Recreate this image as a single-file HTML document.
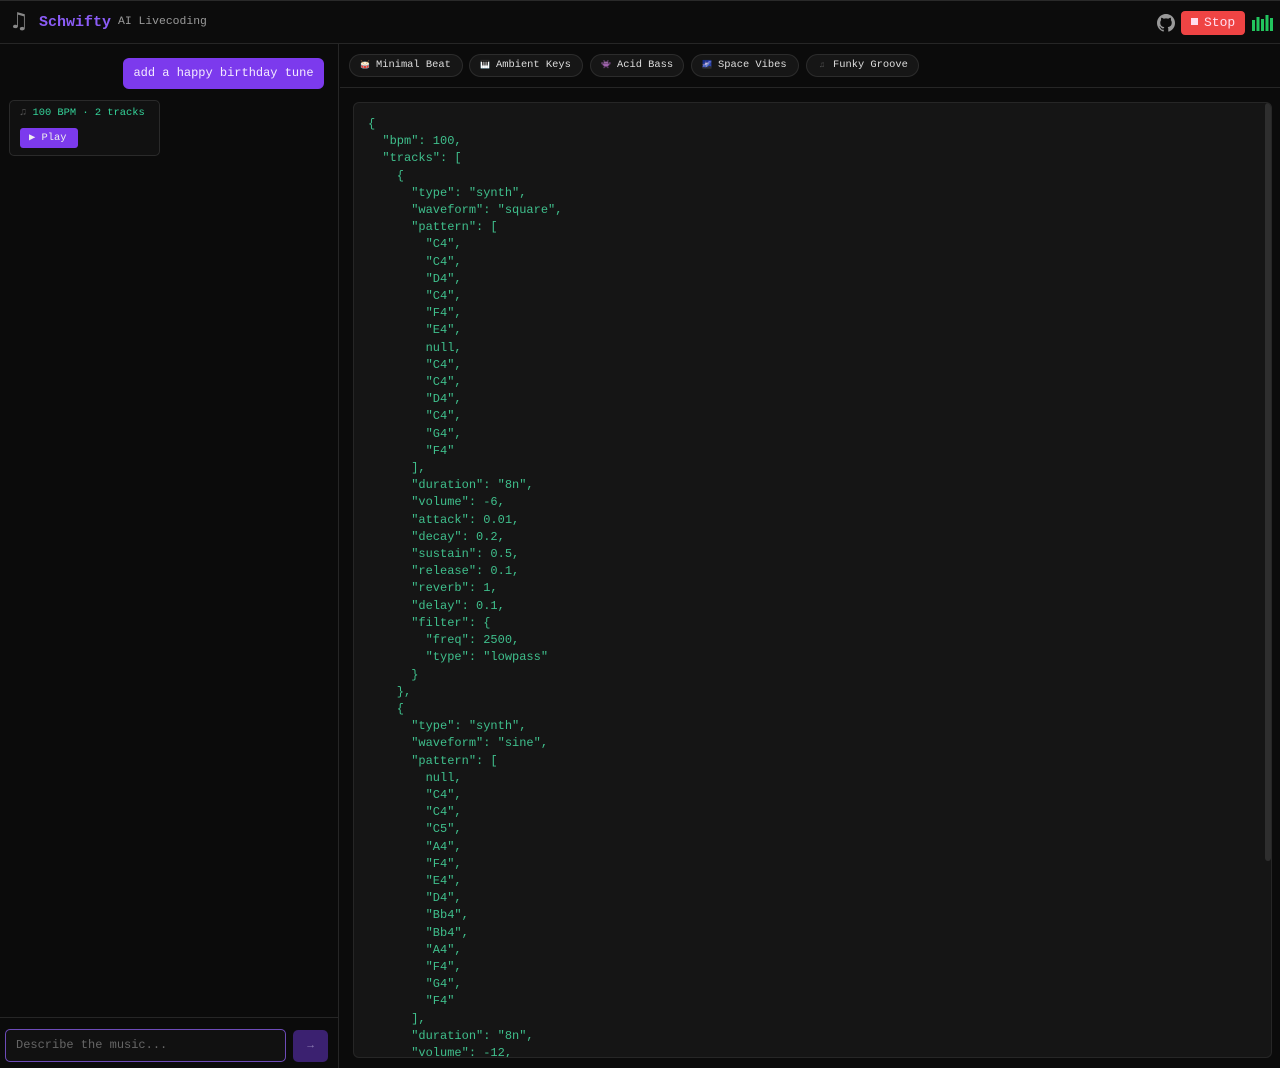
<!DOCTYPE html>
<html><head><meta charset="utf-8"><style>
*{box-sizing:border-box;margin:0;padding:0}
body{width:1280px;height:1068px;background:#0b0b0b;font-family:"Liberation Mono","DejaVu Sans Mono",monospace;color:#ddd;overflow:hidden;position:relative}
.hdr{position:absolute;left:0;top:0;width:1280px;height:44px;border-top:1px solid #2a2a2a;border-bottom:1px solid #262626;background:#0c0c0c}
.logo{position:absolute;left:9px;top:8px;font-size:22px;color:#888;font-family:"DejaVu Sans",sans-serif}
.brand{position:absolute;left:39px;top:13px;font-size:15px;font-weight:bold;color:#8b5cf6}
.sub{position:absolute;left:118px;top:15px;font-size:11.4px;color:#999}
.stop{position:absolute;left:1181px;top:10px;width:64px;height:24px;background:#ef4444;border-radius:4px;color:#fde;font-size:13px;line-height:24px;padding-left:10px}
.stop i{display:inline-block;width:7px;height:7px;background:#fde;margin-right:6px;vertical-align:1px}
.left{position:absolute;left:0;top:44px;width:339px;height:1024px;border-right:1px solid #262626;background:#0b0b0b}
.bubble{position:absolute;left:123px;top:14px;width:201px;height:31px;background:#7c3aed;border-radius:6px;color:#f3eaff;font-size:12px;line-height:31px;text-align:center}
.card{position:absolute;left:9px;top:56px;width:151px;height:56px;border:1px solid #2a2a2a;border-radius:5px;background:#111}
.card .t{position:absolute;left:10px;top:6px;font-size:10.4px;color:#34d399}
.card .p{position:absolute;left:10px;top:27px;width:58px;height:20px;background:#7c3aed;border-radius:3px;color:#eee;font-size:10.4px;line-height:20px;padding-left:9px}
.bot{position:absolute;left:0;top:973px;width:339px;height:51px;border-top:1px solid #262626}
.inp{position:absolute;left:5px;top:11px;width:281px;height:33px;border:1.5px solid #6d4bb8;border-radius:5px;background:#111;color:#666;font-size:12px;line-height:30px;padding-left:10px}
.send{position:absolute;left:293px;top:12px;width:35px;height:32px;background:#3b2170;border-radius:5px;color:#8f7fb5;font-size:11px;text-align:center;line-height:32px}
.bar{position:absolute;left:340px;top:44px;width:940px;height:44px;border-bottom:1px solid #262626}
.chip{position:absolute;top:10px;height:23px;border:1px solid #2c2c2c;background:#161616;border-radius:12px;font-size:10.4px;color:#ddd;line-height:21px;padding-left:10px;white-space:nowrap}
.chip b{display:inline-block;width:10px;font-size:8px;font-weight:normal;margin-right:6px;text-align:center}
.code{position:absolute;left:353px;top:102px;width:919px;height:956px;background:#151515;border:1px solid #262626;border-radius:6px;overflow:hidden}
pre{position:absolute;left:14px;top:13px;font-family:"Liberation Mono",monospace;font-size:12px;line-height:17.2px;color:#3fbf8c}
.sb{position:absolute;right:0;top:0;width:6px;height:758px;background:#2e2e2e;border-radius:3px}
</style></head><body>
<div class="hdr">
<div class="logo">♫</div><div class="brand">Schwifty</div><div class="sub">AI Livecoding</div>
<svg style="position:absolute;left:1157px;top:13px" width="18" height="18" viewBox="0 0 16 16"><path fill="#999" d="M8 0C3.58 0 0 3.58 0 8c0 3.540 2.29 6.53 5.47 7.59.4.07.55-.17.55-.38v-1.33c-2.23.48-2.7-1.07-2.7-1.07-.36-.92-.89-1.170-.89-1.17-.73-.5.06-.49.06-.49.8.06 1.23.83 1.23.83.72 1.22 1.87.87 2.33.66.07-.52.28-.87.5-1.07-1.78-.2-3.64-.89-3.64-3.95 0-.87.31-1.59.82-2.15-.08-.2-.36-1.02.08-2.12 0 0 .67-.21 2.2.82a7.6 7.6 0 014 0c1.53-1.04 2.2-.82 2.2-.82.44 1.1.16 1.92.08 2.12.51.56.82 1.27.82 2.15 0 3.07-1.87 3.75-3.65 3.95.29.25.54.73.54 1.48v2.2c0 .21.15.46.55.38A8.01 8.01 0 0016 8c0-4.420-3.58-8-8-8z"/></svg>
<div class="stop"><i></i>Stop</div>
<svg style="position:absolute;left:1252px;top:14px" width="22" height="16"><g fill="#22c55e"><rect x="0" y="5" width="3" height="11"/><rect x="4.5" y="2" width="3" height="14"/><rect x="9" y="4" width="3" height="12"/><rect x="13.5" y="0" width="3" height="16"/><rect x="18" y="3" width="3" height="13"/></g></svg>
</div>
<div class="left">
<div class="bubble">add a happy birthday tune</div>
<div class="card"><div class="t"><span style="color:#555">♫</span> 100 BPM · 2 tracks</div><div class="p">▶ Play</div></div>
<div class="bot"><div class="inp">Describe the music...</div><div class="send">→</div></div>
</div>
<div class="bar">
<div class="chip" style="left:9px;width:114px"><b>🥁</b>Minimal Beat</div>
<div class="chip" style="left:129px;width:114px"><b>🎹</b>Ambient Keys</div>
<div class="chip" style="left:250px;width:94px"><b>👾</b>Acid Bass</div>
<div class="chip" style="left:351px;width:108px"><b>🌌</b>Space Vibes</div>
<div class="chip" style="left:466px;width:113px"><b style="color:#555">♫</b>Funky Groove</div>
</div>
<div class="code"><div class="sb"></div><pre>{
  "bpm": 100,
  "tracks": [
    {
      "type": "synth",
      "waveform": "square",
      "pattern": [
        "C4",
        "C4",
        "D4",
        "C4",
        "F4",
        "E4",
        null,
        "C4",
        "C4",
        "D4",
        "C4",
        "G4",
        "F4"
      ],
      "duration": "8n",
      "volume": -6,
      "attack": 0.01,
      "decay": 0.2,
      "sustain": 0.5,
      "release": 0.1,
      "reverb": 1,
      "delay": 0.1,
      "filter": {
        "freq": 2500,
        "type": "lowpass"
      }
    },
    {
      "type": "synth",
      "waveform": "sine",
      "pattern": [
        null,
        "C4",
        "C4",
        "C5",
        "A4",
        "F4",
        "E4",
        "D4",
        "Bb4",
        "Bb4",
        "A4",
        "F4",
        "G4",
        "F4"
      ],
      "duration": "8n",
      "volume": -12,</pre></div>
</body></html>
